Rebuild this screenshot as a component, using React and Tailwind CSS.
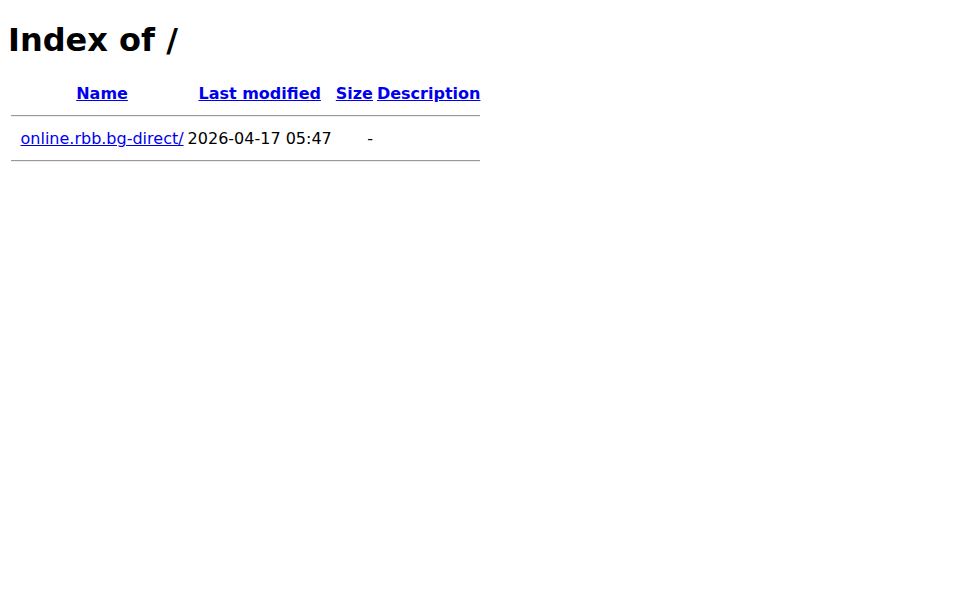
import React from 'react';

const Rule = () => (
    <tr>
        <th colSpan={5} className="p-px">
            <div className="my-2 h-0 border-t border-b border-t-[#9a9a9a] border-b-[#eeeeee]" />
        </th>
    </tr>
);

const App = () => {
    return (
        <div className="min-h-[600px] bg-white px-2 pb-2 text-black font-['DejaVu_Sans',sans-serif] text-base leading-[normal]">
            <h1 className="my-[21.44px] text-[32px] font-bold leading-[normal]">Index of /</h1>
            <table className="border-separate border-spacing-[2px]">
                <tbody>
                    <tr>
                        <th className="p-px align-top"><div className="w-[5.5px]" /></th>
                        <th className="p-px"><a href="#" className="text-[#0000ee] underline">Name</a></th>
                        <th className="p-px"><a href="#" className="text-[#0000ee] underline">Last modified</a></th>
                        <th className="p-px"><a href="#" className="text-[#0000ee] underline">Size</a></th>
                        <th className="p-px"><a href="#" className="text-[#0000ee] underline">Description</a></th>
                    </tr>
                    <Rule />
                    <tr>
                        <td className="p-px align-top"><div className="w-[5.5px]" /></td>
                        <td className="p-px"><a href="#" className="text-[#0000ee] underline">online.rbb.bg-direct/</a></td>
                        <td className="p-px text-right">2026-04-17 05:47</td>
                        <td className="p-px text-right">- </td>
                        <td className="p-px">&nbsp;</td>
                    </tr>
                    <Rule />
                </tbody>
            </table>
        </div>
    );
};

export default App;
